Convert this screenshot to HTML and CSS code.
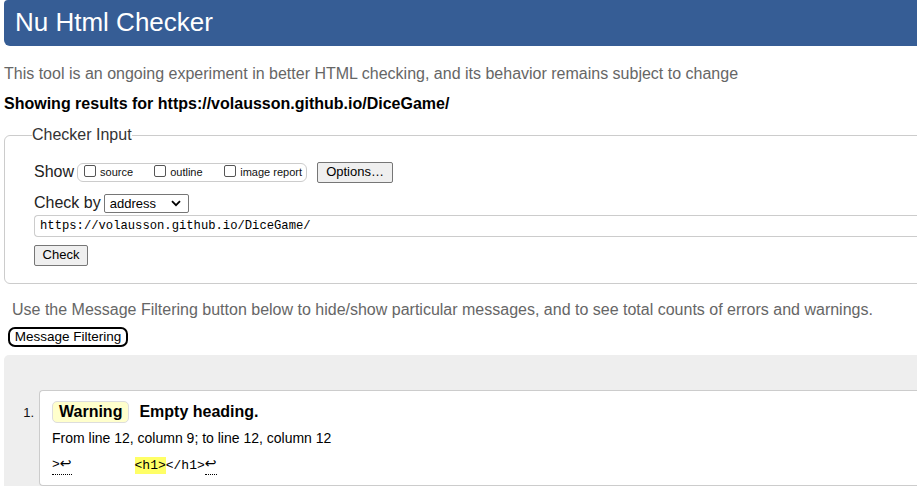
FILE: index.html
```html
<!DOCTYPE html>
<html>
<head>
<meta charset="utf-8">
<link rel="stylesheet" href="styles.css">
</head>
<body>
<div class="page">
  <h1 class="title">Nu Html Checker</h1>
  <p class="intro">This tool is an ongoing experiment in better HTML checking, and its behavior remains subject to change</p>
  <p class="results">Showing results for https://volausson.github.io/DiceGame/</p>
  <fieldset class="checker">
    <legend>Checker Input</legend>
    <div class="row show-row">
      <span class="lbl">Show</span>
      <span class="group">
        <label><span class="cb"></span>source</label>
        <label><span class="cb"></span>outline</label>
        <label><span class="cb"></span>image report</label>
      </span>
      <span class="btn options">Options…</span>
    </div>
    <div class="row by-row">
      <span class="lbl">Check by</span>
      <span class="select">address<svg width="10" height="7" viewBox="0 0 10 7"><path d="M1 1.2 L5 5.2 L9 1.2" fill="none" stroke="#000" stroke-width="1.8"/></svg></span>
    </div>
    <div class="url">https://volausson.github.io/DiceGame/</div>
    <span class="btn check">Check</span>
  </fieldset>
  <p class="filter-note">Use the Message Filtering button below to hide/show particular messages, and to see total counts of errors and warnings.</p>
  <span class="filter-btn">Message Filtering</span>
  <div class="results-area">
    <ol class="msgs">
      <li class="msg">
        <span class="num">1.</span>
        <div class="card">
          <p class="head"><span class="badge">Warning</span><span class="msg-text">Empty heading.</span></p>
          <p class="loc">From line 12, column 9; to line 12, column 12</p>
          <p class="code"><span class="ws">&gt;<span class="ret">↩</span></span><span class="gap"></span><mark>&lt;h1&gt;</mark>&lt;/h1&gt;<span class="ws"><span class="ret">↩</span></span></p>
        </div>
      </li>
    </ol>
  </div>
</div>
</body>
</html>
```
FILE: styles.css
```css
html, body {
  margin: 0;
  padding: 0;
  overflow: hidden;
  background: #fff;
}
body {
  font-family: "Liberation Sans", Arial, sans-serif;
  color: #000;
}
.page {
  width: 1100px;
  padding: 0 0 0 4px;
}
.title {
  margin: 0;
  height: 46px;
  box-sizing: border-box;
  background: #365d95;
  color: #fff;
  font-weight: normal;
  font-size: 26px;
  line-height: 45px;
  padding-left: 11px;
  border-radius: 0 0 0 6px;
  border-top-left-radius: 4px;
}
.intro {
  margin: 18px 0 0;
  font-size: 16px;
  line-height: 20px;
  color: #666;
}
.results {
  margin: 10px 0 0;
  font-size: 16px;
  line-height: 20px;
  font-weight: bold;
}
.checker {
  margin: 12px 0 0;
  border: 1px solid #ccc;
  border-radius: 6px;
  padding: 16px 0 17px 29px;
}
.checker legend {
  font-size: 16px;
  color: #333;
  padding: 0;
  margin-left: -2px;
}
.row {
  display: flex;
  align-items: center;
}
.lbl {
  font-size: 16px;
  color: #222;
}
.show-row {
  height: 22px;
  margin-top: 1px;
}
.group {
  margin-left: 3px;
  border: 1px solid #ccc;
  border-radius: 6px;
  height: 19px;
  box-sizing: border-box;
  display: flex;
  align-items: center;
  padding: 0 4px 0 6px;
  width: 230px;
  justify-content: space-between;
}
.group label {
  font-size: 11px;
  display: flex;
  align-items: center;
  color: #111;
}
.group label:nth-child(1) { width: 68px; }
.group label:nth-child(2) { width: 68px; }
.cb {
  width: 12px;
  height: 12px;
  border: 1px solid #555;
  border-radius: 2px;
  margin-right: 4px;
  box-sizing: border-box;
  position: relative;
  top: -1px;
}
.btn {
  display: inline-block;
  box-sizing: border-box;
  background: #efefef;
  border: 1px solid #767676;
  border-radius: 2px;
  font-size: 13px;
  line-height: 18px;
  color: #000;
  text-align: center;
}
.options {
  margin-left: 10px;
  width: 76px;
  height: 21px;
}
.by-row {
  margin-top: 10px;
  height: 20px;
}
.select {
  margin-left: 3px;
  box-sizing: border-box;
  width: 85px;
  height: 19px;
  border: 1px solid #767676;
  border-radius: 2px;
  font-size: 13px;
  padding: 0 0 0 5px;
  display: flex;
  align-items: center;
  justify-content: space-between;
  padding-right: 7px;
}
.url {
  margin-top: 2px;
  box-sizing: border-box;
  height: 22px;
  border: 1px solid #ccc;
  border-right: none;
  border-radius: 4px 0 0 4px;
  font-family: "Liberation Mono", "DejaVu Sans Mono", monospace;
  font-size: 12.2px;
  line-height: 20px;
  padding-left: 5px;
}
.check {
  margin-top: 8px;
  width: 54px;
  height: 21px;
  font-size: 13px;
}
.filter-note {
  margin: 16px 0 0 8px;
  font-size: 16px;
  line-height: 20px;
  color: #666;
}
.filter-btn {
  display: inline-block;
  margin: 7px 0 0 4px;
  box-sizing: border-box;
  height: 20px;
  width: 120px;
  border: 2px solid #000;
  border-radius: 7px;
  font-size: 13.5px;
  line-height: 16px;
  text-align: center;
}
.results-area {
  margin-top: 8px;
  background: #eee;
  border-radius: 5px 0 0 0;
  padding: 35px 0 10px 0;
}
.msgs {
  list-style: none;
  margin: 0;
  padding: 0;
}
.msg {
  display: flex;
  align-items: flex-start;
}
.num {
  width: 35px;
  font-size: 13px;
  margin-top: 15px;
  box-sizing: border-box;
  padding-right: 5px;
  text-align: right;
  color: #111;
}
.card {
  flex: 1;
  background: #fff;
  border: 1px solid #ccc;
  border-right: none;
  border-radius: 4px 0 0 4px;
  padding: 10px 0 6px 12px;
  height: 96px;
  box-sizing: border-box;
}
.card p { margin: 0; }
.head {
  display: flex;
  align-items: center;
  height: 22px;
}
.badge {
  display: inline-block;
  background: #ffffcc;
  border: 1px solid #ddd;
  border-radius: 5px;
  font-weight: bold;
  font-size: 16px;
  line-height: 20px;
  padding: 0 6px;
}
.msg-text {
  font-weight: bold;
  font-size: 16px;
  margin-left: 10px;
}
.loc {
  font-size: 14px;
  margin-top: 6px !important;
  line-height: 18px;
}
.code {
  margin-top: 8px !important;
  font-family: "Liberation Mono", "DejaVu Sans Mono", monospace;
  font-size: 13px;
  line-height: 17px;
  display: flex;
  align-items: center;
}
.ws {
  border-bottom: 1px dotted #000;
  padding-bottom: 1px;
}
.ret {
  font-family: "DejaVu Sans", sans-serif;
  font-size: 14px;
}
.gap {
  display: inline-block;
  width: 63px;
}
mark {
  background: #ffff66;
  color: #000;
}
```
